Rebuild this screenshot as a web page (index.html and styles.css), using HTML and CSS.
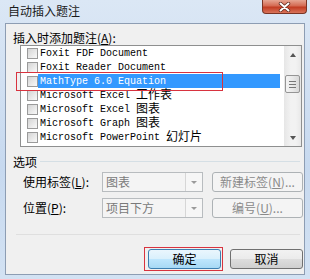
FILE: index.html
```html
<!DOCTYPE html>
<html lang="zh-CN">
  <head>
    <meta charset="UTF-8" />
    <title>自动插入题注</title>
    <link rel="stylesheet" href="styles.css">
  </head>
  <body>
    <div class="window">
      <div class="titlebar">
        <span class="title">自动插入题注</span>
        <span class="close-btn">
          <svg width="13" height="10" viewBox="0 0 13 10">
            <path d="M2.5 1.5 L10.5 8.5 M10.5 1.5 L2.5 8.5" stroke="#5a2418" stroke-width="3.4" stroke-linecap="round" />
            <path d="M2.5 1.5 L10.5 8.5 M10.5 1.5 L2.5 8.5" stroke="#ffffff" stroke-width="2" stroke-linecap="round" />
          </svg>
        </span>
      </div>

      <div class="client">
        <div class="field-label">插入时添加题注(<u>A</u>):</div>

        <div class="listbox">
          <ul class="items">
            <li class="item"><span class="check"></span><span class="name">Foxit FDF Document</span></li>
            <li class="item"><span class="check"></span><span class="name">Foxit Reader Document</span></li>
            <li class="item selected"><span class="check"></span><span class="name">MathType 6.0 Equation</span></li>
            <li class="item"><span class="check"></span><span class="name">Microsoft Excel <span class="cjk">工作表</span></span></li>
            <li class="item"><span class="check"></span><span class="name">Microsoft Excel <span class="cjk">图表</span></span></li>
            <li class="item"><span class="check"></span><span class="name">Microsoft Graph <span class="cjk">图表</span></span></li>
            <li class="item"><span class="check"></span><span class="name">Microsoft PowerPoint <span class="cjk">幻灯片</span></span></li>
          </ul>
          <div class="scrollbar">
            <div class="arrow up"></div>
            <div class="track-top"></div>
            <div class="thumb"><span></span><span></span><span></span></div>
            <div class="track-bottom"></div>
            <div class="arrow down"></div>
          </div>
          <div class="mark mark-item"></div>
        </div>

        <div class="group">
          <span class="group-title">选项</span>
          <span class="rule"></span>
        </div>

        <div class="option-row">
          <span class="option-label">使用标签(<u>L</u>):</span>
          <div class="combo"><span class="combo-text">图表</span><span class="combo-btn"></span></div>
          <button class="btn disabled wide">新建标签(<u>N</u>)...</button>
        </div>

        <div class="option-row second">
          <span class="option-label">位置(<u>P</u>):</span>
          <div class="combo"><span class="combo-text">项目下方</span><span class="combo-btn"></span></div>
          <button class="btn disabled wide">编号(<u>U</u>)...</button>
        </div>

        <div class="separator"></div>

        <div class="actions">
          <div class="marked">
            <button class="btn default">确定</button>
            <span class="mark mark-ok"></span>
          </div>
          <button class="btn">取消</button>
        </div>
      </div>
    </div>
  </body>
</html>
```

FILE: styles.css
```css
* {
  margin: 0;
  padding: 0;
  box-sizing: border-box;
}

body {
  width: 310px;
  height: 279px;
  overflow: hidden;
  font-family: "Noto Sans CJK SC", "DejaVu Sans", sans-serif;
  font-size: 12px;
  color: #000;
}

.window {
  width: 310px;
  height: 279px;
  background: linear-gradient(#dbe7f5, #c7d9ef 60%, #d3e2f3);
  padding: 0 5px 4px 5px;
  display: flex;
  flex-direction: column;
}

.titlebar {
  height: 23px;
  display: flex;
  justify-content: space-between;
  align-items: flex-start;
  margin-right: -2px;
}

.title {
  line-height: 14px;
  padding: 4px 0 0 3px;
  color: #1a1a1a;
}

.close-btn {
  width: 45px;
  height: 14px;
  border: 1px solid #7a3424;
  border-top: none;
  border-radius: 0 0 4px 4px;
  background: linear-gradient(#e6a592, #d46a52 45%, #c23c22 55%, #d8735a);
  display: flex;
  justify-content: center;
  align-items: center;
}

.client {
  height: 252px;
  background: #f0f0f0;
  border: 1px solid #8d9db3;
  padding: 0 1px 0 7px;
}

.field-label {
  margin-top: 7px;
  line-height: 14px;
}

u {
  text-decoration: underline;
  text-underline-offset: 1px;
}

.listbox {
  position: relative;
  margin: 0 0 0 7px;
  width: 282px;
  height: 102px;
  border: 1px solid #8e8f8f;
  background: #fff;
  display: flex;
}

.items {
  list-style: none;
  flex: 1;
  padding-right: 4px;
}

.item {
  height: 14px;
  display: flex;
  align-items: center;
  padding-left: 6px;
}

.check {
  width: 11px;
  height: 11px;
  border: 1px solid #9a9a9a;
  background: linear-gradient(135deg, #d4d4d4, #eeeeee 70%, #f8f8f8);
  flex-shrink: 0;
}

.name {
  flex: 1;
  height: 14px;
  display: flex;
  align-items: center;
  line-height: 13px;
  padding: 1px 0 0 2px;
  font-family: "Liberation Mono", "DejaVu Sans Mono", monospace;
  font-size: 10px;
  white-space: pre;
}

.cjk {
  font-family: "Noto Sans CJK SC", sans-serif;
  font-size: 12px;
  line-height: 12px;
  margin-bottom: 3px;
}

.selected .name {
  background: #3399ff;
  color: #fff;
}

.scrollbar {
  width: 17px;
  display: flex;
  flex-direction: column;
  background: linear-gradient(90deg, #e6e6e6, #f2f2f2 40%, #f2f2f2 70%, #e8e8e8);
}

.arrow {
  height: 17px;
  display: flex;
  justify-content: center;
  align-items: center;
}

.arrow::before {
  content: "";
  border-left: 3px solid transparent;
  border-right: 3px solid transparent;
}

.arrow.up::before {
  border-bottom: 4px solid #555;
}

.arrow.down::before {
  border-top: 4px solid #555;
}

.track-top {
  height: 12px;
}

.thumb {
  height: 18px;
  margin: 0 1px;
  border: 1px solid #959595;
  border-radius: 2px;
  background: linear-gradient(90deg, #f3f3f3, #e9e9e9 50%, #d8d8d8);
  display: flex;
  flex-direction: column;
  justify-content: center;
  align-items: center;
  gap: 2px;
}

.thumb span {
  width: 7px;
  height: 1px;
  background: #777;
}

.track-bottom {
  flex: 1;
}

.mark {
  position: absolute;
  border: 1px solid #d8333f;
  pointer-events: none;
}

.mark-item {
  left: -5px;
  top: 26px;
  width: 207px;
  height: 19px;
}

.group {
  margin-top: 8px;
  display: flex;
  align-items: center;
  height: 14px;
}

.group-title {
  line-height: 14px;
}

.rule {
  flex: 1;
  height: 1px;
  background: #d5dfe5;
  margin: 0 3px 2px 3px;
}

.option-row {
  margin-top: 3px;
  display: flex;
  align-items: center;
  height: 20px;
}

.option-row.second {
  margin-top: 6px;
}

.option-label {
  width: 89px;
  padding-left: 10px;
  line-height: 14px;
}

.combo {
  width: 101px;
  height: 20px;
  border: 1px solid #b8bcbf;
  background: #f4f4f4;
  display: flex;
  margin-right: 9px;
}

.combo-text {
  flex: 1;
  padding-left: 3px;
  line-height: 18px;
  color: #7a7a7a;
}

.combo-btn {
  width: 17px;
  border-left: 1px solid #d6d6d6;
  background: #f6f6f6;
  display: flex;
  justify-content: center;
  align-items: center;
}

.combo-btn::before {
  content: "";
  border-left: 3px solid transparent;
  border-right: 3px solid transparent;
  border-top: 3px solid #9a9a9a;
}

.btn {
  width: 73px;
  height: 20px;
  font-family: "Noto Sans CJK SC", sans-serif;
  font-size: 12px;
  line-height: 16px;
  color: #000;
  border: 1px solid #707070;
  border-radius: 3px;
  background: linear-gradient(#f2f2f2, #ebebeb 50%, #dddddd 51%, #cfcfcf);
}

.btn.wide {
  width: 91px;
}

.btn.disabled {
  border-color: #adb2b5;
  background: #f4f4f4;
  color: #8a8a8a;
}

.btn.default {
  border-color: #3c7fb1;
  background: linear-gradient(#eaf6fd, #d9f0fc 50%, #bee6fd 51%, #a7d9f5);
}

.separator {
  margin: 16px 3px 0 3px;
  height: 1px;
  background: #dfdfdf;
}

.actions {
  margin-top: 14px;
  display: flex;
  justify-content: flex-end;
  gap: 9px;
}

.marked {
  position: relative;
  display: flex;
}

.mark-ok {
  left: -4px;
  top: -2px;
  width: 79px;
  height: 24px;
}
```
